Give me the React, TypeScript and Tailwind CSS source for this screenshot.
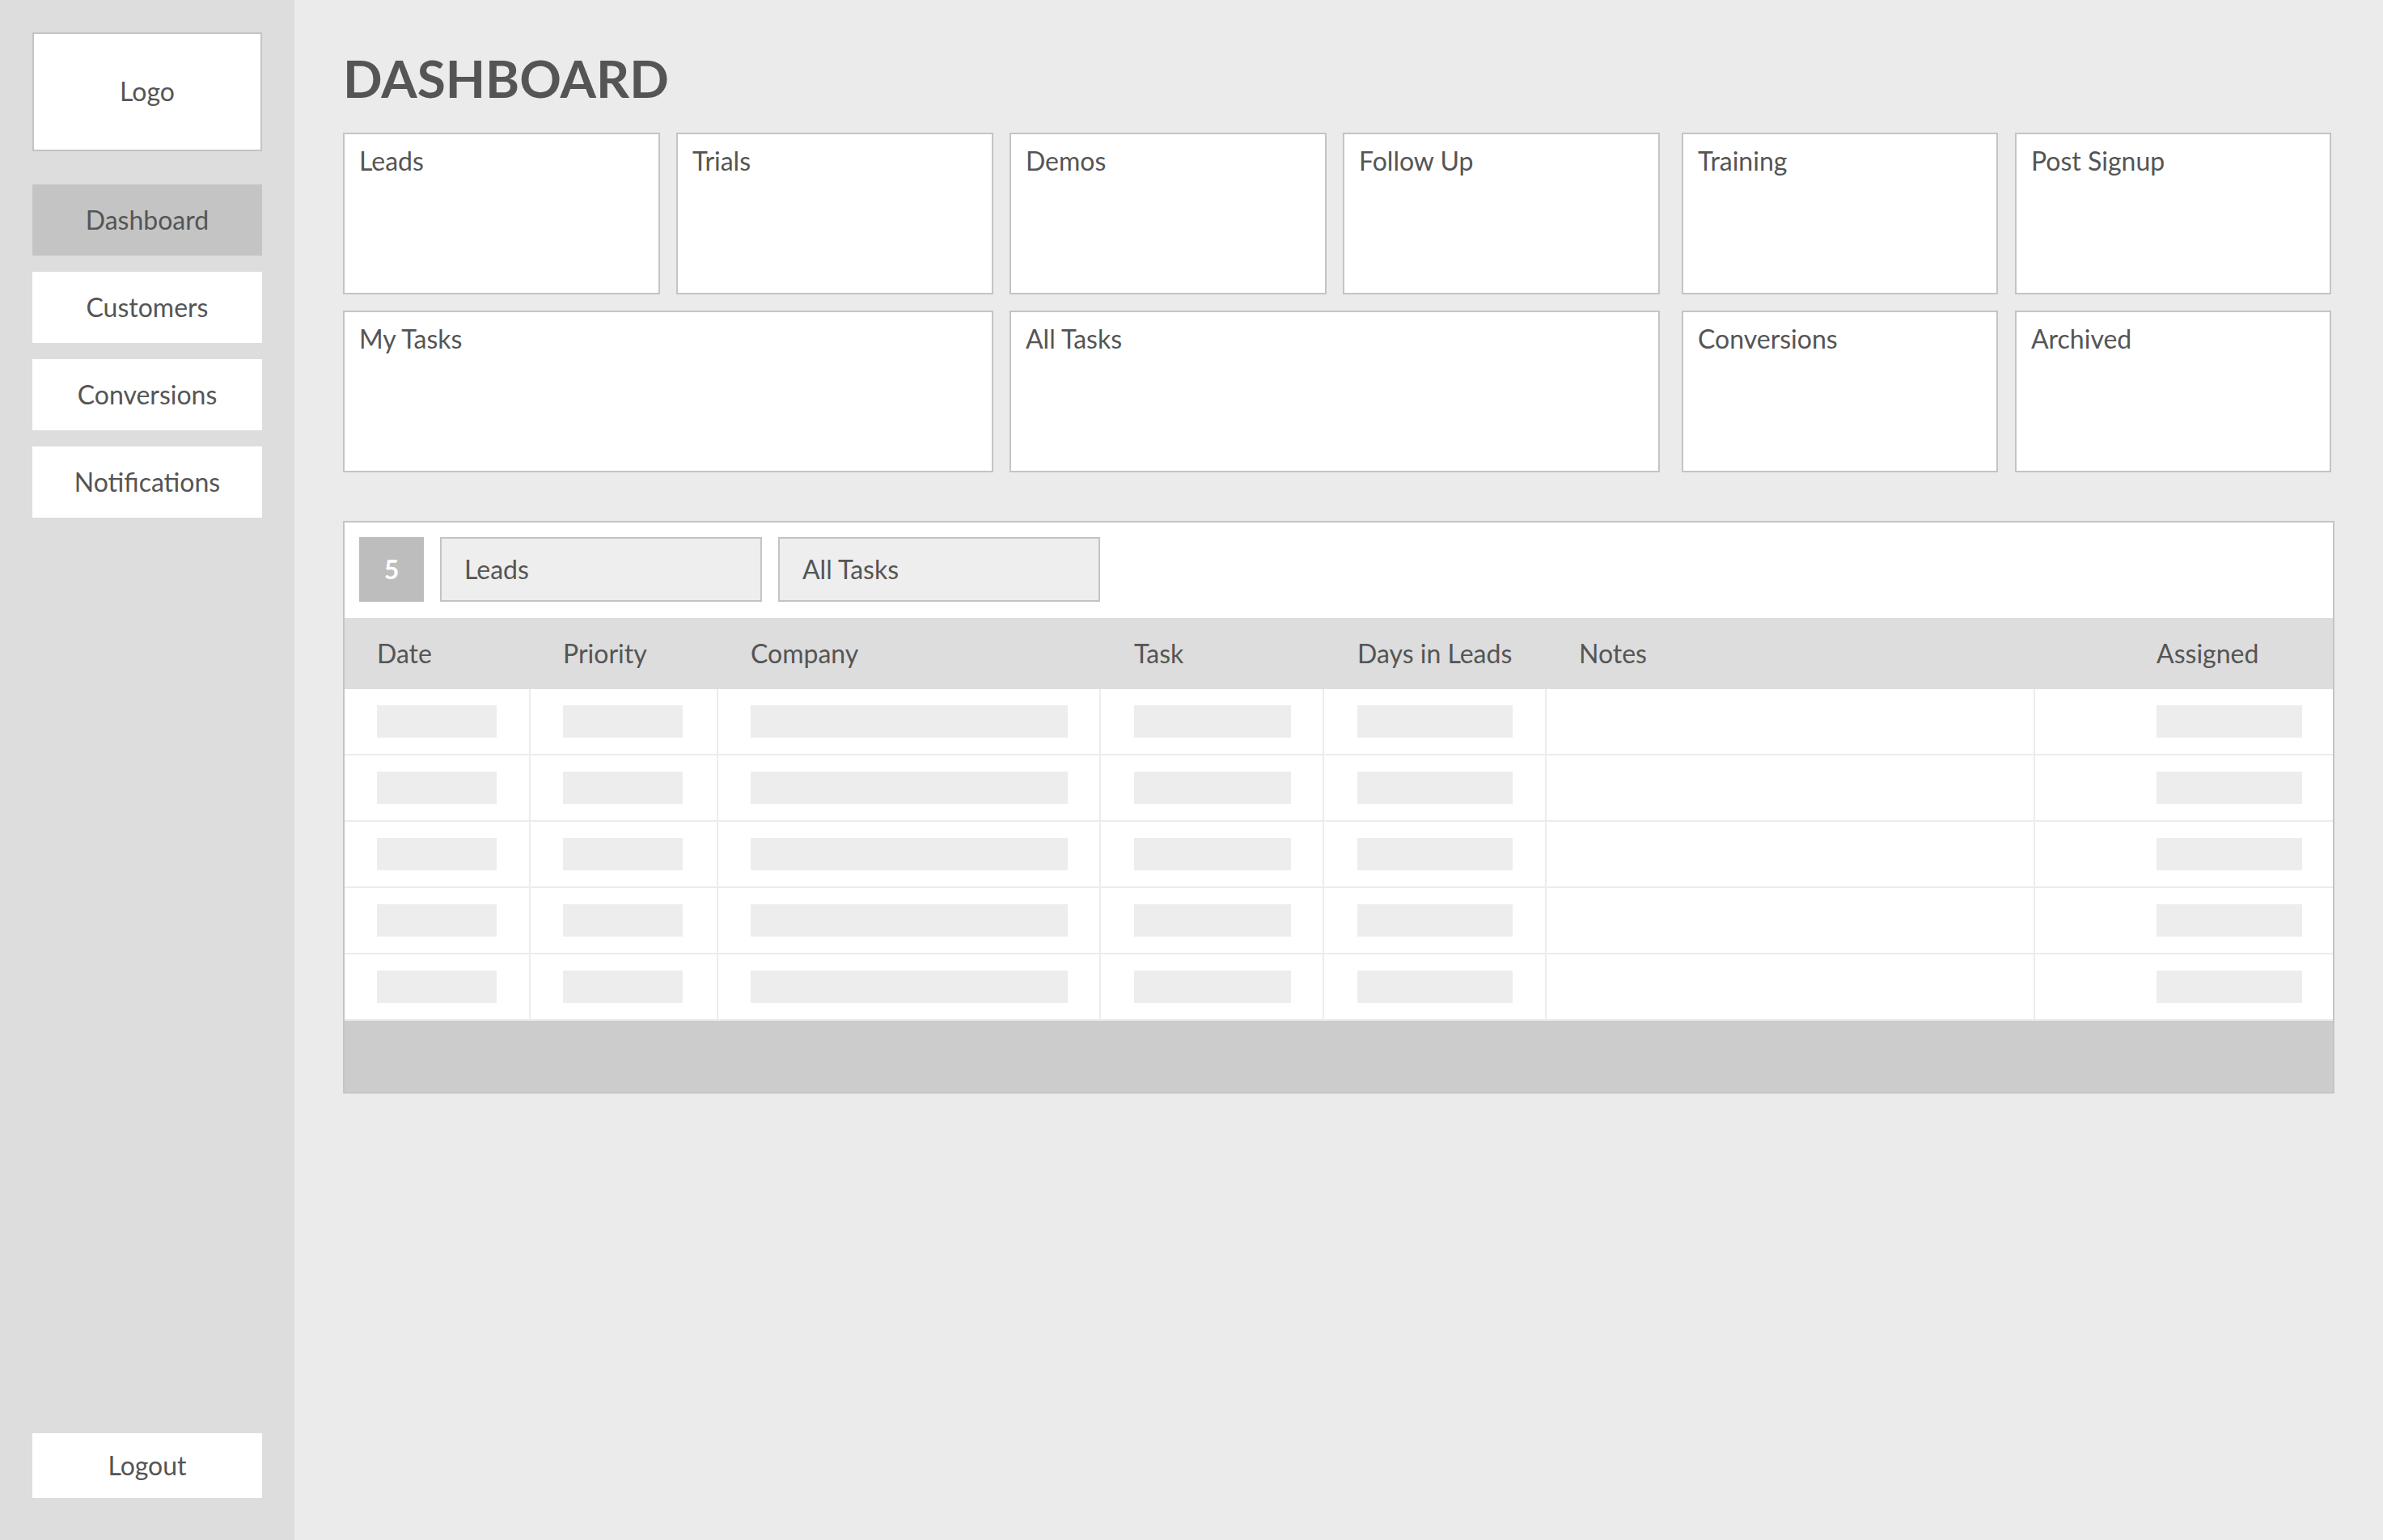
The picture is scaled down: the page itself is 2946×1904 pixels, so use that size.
import React from "react";

const navItems = ["Dashboard", "Customers", "Conversions", "Notifications"];

function Card({ title }: { title: string }) {
  return (
    <div className="h-[200px] bg-white border-2 border-[#c4c4c4] px-[18px] pt-[14px] text-[32px] leading-[1.2] text-[#555555]">
      {title}
    </div>
  );
}

const barWidths = ["w-[148px]", "w-[148px]", "w-[392px]", "w-[194px]", "w-[192px]", "", "w-[180px]"];

export default function App() {
  return (
    <div
      className="flex h-screen w-full overflow-hidden text-[#555555]"
      style={{ fontFamily: "Lato, 'Noto Sans', sans-serif" }}
    >
      {/* Sidebar */}
      <aside className="w-[364px] shrink-0 bg-[#dddddd] px-[40px] pt-[40px] pb-[52px] flex flex-col">
        <div className="h-[147px] bg-white border-2 border-[#c4c4c4] flex items-center justify-center text-[32px] leading-[1.2]">
          Logo
        </div>
        <nav className="mt-[41px] flex flex-col gap-[20px]">
          {navItems.map((n, i) => (
            <div
              key={n}
              className={
                i === 0
                  ? "h-[88px] bg-[#c4c4c4] flex items-center justify-center text-[32px] leading-[1.2]"
                  : "h-[88px] bg-white flex items-center justify-center text-[32px] leading-[1.2]"
              }
            >
              {n}
            </div>
          ))}
        </nav>
        <div className="mt-auto h-[80px] bg-white flex items-center justify-center text-[32px] leading-[1.2]">
          Logout
        </div>
      </aside>

      {/* Main */}
      <main className="flex-1 bg-[#ebebeb] pl-[60px] pr-[60px] pt-[59px]">
        <h1 className="text-[64px] font-bold leading-[1.2] text-[#555555]">DASHBOARD</h1>

        <div className="mt-[28px] flex flex-col gap-[20px]">
          <div className="flex gap-[27px]">
            <div className="w-[1628px] grid grid-cols-4 gap-[20px]">
              <Card title="Leads" />
              <Card title="Trials" />
              <Card title="Demos" />
              <Card title="Follow Up" />
            </div>
            <div className="w-[803px] grid grid-cols-2 gap-[21px]">
              <Card title="Training" />
              <Card title="Post Signup" />
            </div>
          </div>
          <div className="flex gap-[27px]">
            <div className="w-[1628px] grid grid-cols-2 gap-[20px]">
              <Card title="My Tasks" />
              <Card title="All Tasks" />
            </div>
            <div className="w-[803px] grid grid-cols-2 gap-[21px]">
              <Card title="Conversions" />
              <Card title="Archived" />
            </div>
          </div>
        </div>

        {/* Table */}
        <div className="mt-[60px] w-[2462px] bg-white border-2 border-[#c4c4c4]">
          <div className="pt-[18px] pl-[18px] pb-[20px] flex gap-[20px]">
            <div className="w-[80px] h-[80px] bg-[#bdbdbd] text-white font-bold text-[32px] leading-[1.2] flex items-center justify-center">
              5
            </div>
            <div className="w-[398px] h-[80px] bg-[#eeeeee] border-2 border-[#c4c4c4] pl-[28px] flex items-center text-[32px] leading-[1.2]">
              Leads
            </div>
            <div className="w-[398px] h-[80px] bg-[#eeeeee] border-2 border-[#c4c4c4] pl-[28px] flex items-center text-[32px] leading-[1.2]">
              All Tasks
            </div>
          </div>

          <div className="h-[88px] bg-[#dddddd] grid grid-cols-[230px_232px_473px_276px_275px_604px_1fr] items-center text-[32px] leading-[1.2]">
            <div className="pl-[40px]">Date</div>
            <div className="pl-[40px]">Priority</div>
            <div className="pl-[40px]">Company</div>
            <div className="pl-[41px]">Task</div>
            <div className="pl-[41px]">Days in Leads</div>
            <div className="pl-[40px]">Notes</div>
            <div className="pl-[150px]">Assigned</div>
          </div>

          {[0, 1, 2, 3, 4].map((r) => (
            <div
              key={r}
              className="h-[82px] border-b-2 border-[#ececec] grid grid-cols-[230px_232px_473px_276px_275px_604px_1fr]"
            >
              {barWidths.map((w, c) => (
                <div
                  key={c}
                  className={
                    c < 6
                      ? c >= 3 && c <= 4
                        ? "border-r-2 border-[#ececec] pl-[41px] pt-[20px]"
                        : "border-r-2 border-[#ececec] pl-[40px] pt-[20px]"
                      : "pl-[150px] pt-[20px]"
                  }
                >
                  {w ? <div className={`${w} h-[40px] bg-[#ededed]`} /> : null}
                </div>
              ))}
            </div>
          ))}

          <div className="h-[88px] bg-[#cccccc]" />
        </div>
      </main>
    </div>
  );
}
